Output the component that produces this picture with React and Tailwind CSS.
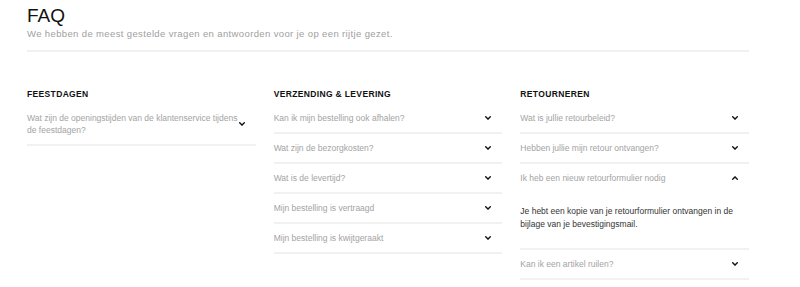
import React from "react";

const font = { fontFamily: '"Liberation Sans", Arial, Helvetica, sans-serif' };

function Chevron({ up }) {
  return (
    <svg width="6" height="4" viewBox="0 0 6 4" className="shrink-0" aria-hidden="true">
      <path
        d={up ? "M0.7 3.2 L3 0.9 L5.3 3.2" : "M0.7 0.8 L3 3.1 L5.3 0.8"}
        fill="none"
        stroke="#111"
        strokeWidth="1.4"
        strokeLinecap="square"
      />
    </svg>
  );
}

function Item({ q, open, answer }) {
  return (
    <div className="border-b-2 border-[#f1f1f1]">
      <div className="flex items-center justify-between py-2 pr-[11px]">
        <span className="mr-[-1px] text-[8.5px] leading-[12px] text-[#a3a3a3]">{q}</span>
        <Chevron up={open} />
      </div>
      {open && (
        <div className="pt-[13px] pb-[16px] text-[8.5px] leading-[13.3px] text-[#333]">{answer}</div>
      )}
    </div>
  );
}

function Column({ title, items }) {
  return (
    <div>
      <h3 className="mb-[4px] text-[8.5px] leading-[12px] font-bold tracking-[0.35px] text-[#111]">{title}</h3>
      {items.map((it, i) => (
        <Item key={i} {...it} />
      ))}
    </div>
  );
}

export default function App() {
  const cols = [
    {
      title: "FEESTDAGEN",
      items: [{ q: "Wat zijn de openingstijden van de klantenservice tijdens de feestdagen?" }],
    },
    {
      title: "VERZENDING & LEVERING",
      items: [
        { q: "Kan ik mijn bestelling ook afhalen?" },
        { q: "Wat zijn de bezorgkosten?" },
        { q: "Wat is de levertijd?" },
        { q: "Mijn bestelling is vertraagd" },
        { q: "Mijn bestelling is kwijtgeraakt" },
      ],
    },
    {
      title: "RETOURNEREN",
      items: [
        { q: "Wat is jullie retourbeleid?" },
        { q: "Hebben jullie mijn retour ontvangen?" },
        {
          q: "Ik heb een nieuw retourformulier nodig",
          open: true,
          answer: "Je hebt een kopie van je retourformulier ontvangen in de bijlage van je bevestigingsmail.",
        },
        { q: "Kan ik een artikel ruilen?" },
      ],
    },
  ];
  return (
    <div className="w-[800px] h-[287px] bg-white overflow-hidden" style={font}>
      <div className="ml-[27px] w-[722px] pt-[6px]">
        <h1 className="text-[19px] leading-[19px] text-[#111]">FAQ</h1>
        <p className="mt-[3px] text-[9.5px] leading-[12px] tracking-[0.37px] text-[#a0a0a0]">
          We hebben de meest gestelde vragen en antwoorden voor je op een rijtje gezet.
        </p>
        <div className="mt-[10px] h-[2px] bg-[#f1f1f1]" />
        <div className="mt-[36px] grid grid-cols-3 gap-[18px]">
          {cols.map((c) => (
            <Column key={c.title} {...c} />
          ))}
        </div>
      </div>
    </div>
  );
}
